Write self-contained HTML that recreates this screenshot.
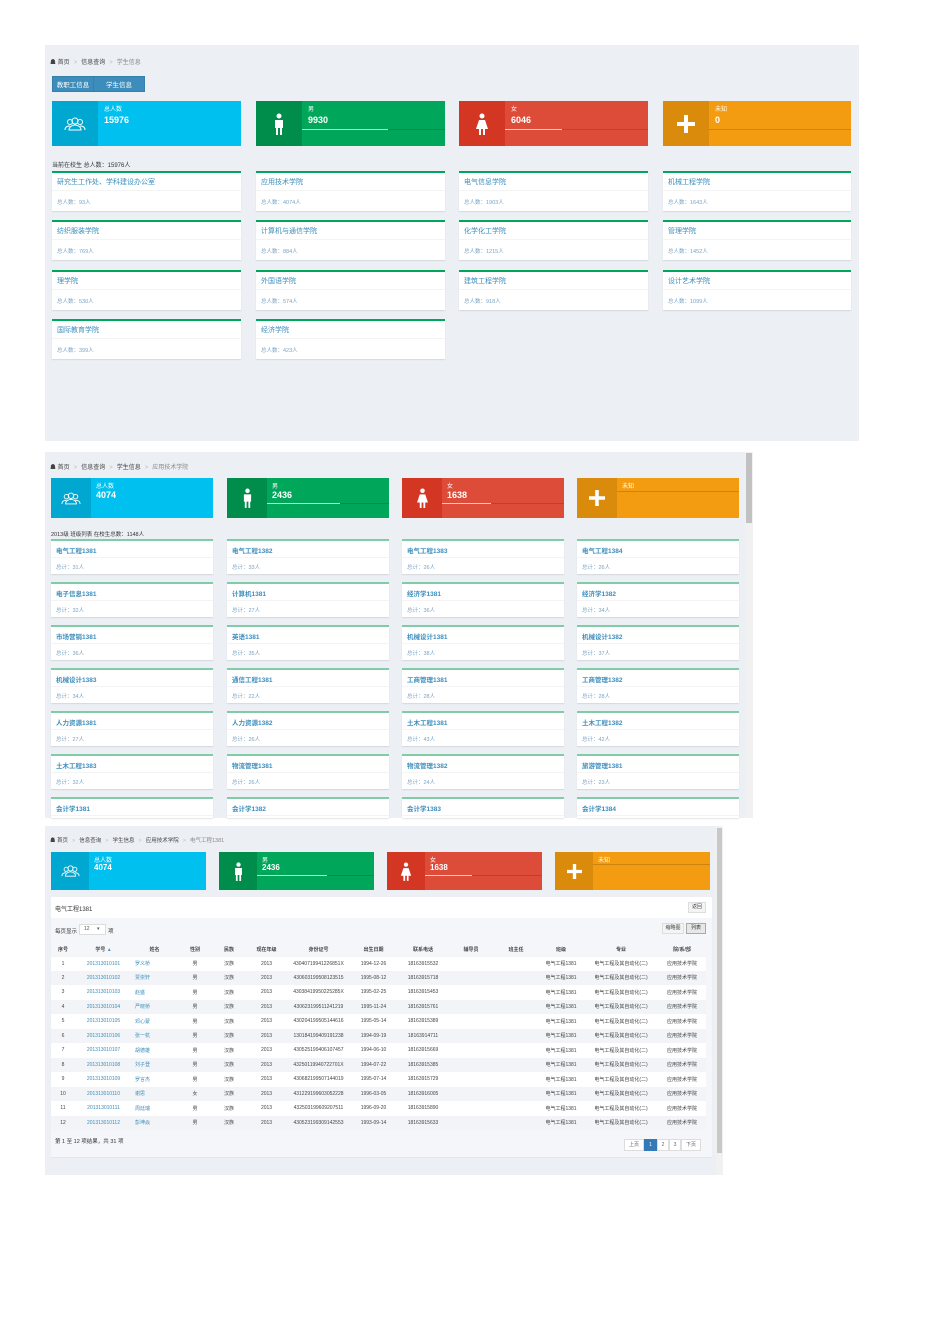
<!DOCTYPE html>
<html><head><meta charset="utf-8">
<style>
*{margin:0;padding:0;box-sizing:border-box}
body{width:950px;height:1344px;background:#fff;position:relative;font-family:"Liberation Sans","Noto Sans CJK SC",sans-serif;overflow:hidden}
.p{position:absolute;background:#ecf0f5}
.a{position:absolute}
.bc{position:absolute;font-size:6px;color:#444;white-space:nowrap}
.bc i{color:#bbb;font-style:normal;margin:0 4px}
.bc span.g{color:#888}
.sb{position:absolute;color:#fff;overflow:hidden}
.sb .ic{position:absolute;left:0;top:0;bottom:0;display:flex;align-items:center;justify-content:center}
.sb .l{position:absolute;font-size:6px}
.sb .n{position:absolute;font-size:9px;font-weight:bold}
.sb .bar{position:absolute;height:1px;background:rgba(0,0,0,.15)}
.sb .bar b{display:block;height:1px;background:rgba(255,255,255,.75)}
.cy{background:#00c0ef}.cy .ic{background:#00a7d0}
.gr{background:#00a65a}.gr .ic{background:#008d4c}
.rd{background:#dd4b39}.rd .ic{background:#d33724}
.og{background:#f39c12}.og .ic{background:#db8b0b}
.cd{position:absolute;background:#fff;border-top:2px solid #00a65a;box-shadow:0 1px 1px rgba(0,0,0,.1)}
.cd .t{position:absolute;left:5px;top:4px;font-size:7px;color:#3c8dbc;white-space:nowrap}
.cd .hr{position:absolute;left:0;right:0;border-top:1px solid #f4f4f4}
.cd .c{position:absolute;left:5px;font-size:5.5px;color:#7aa3c5;white-space:nowrap}
.c2{border-top-color:#7fcca6}
.c2 .t{font-weight:bold;font-size:6.5px}
table{border-collapse:collapse;table-layout:fixed;position:absolute;font-size:5px;color:#444}
td,th{height:14.5px;text-align:center;white-space:nowrap;overflow:hidden}
th{font-weight:bold;height:13px;border-bottom:1px solid #f4f4f4}
tr:nth-child(odd) td{background:#f2f4f7}
tr:nth-child(even) td{background:#fff}
td.b{color:#3c8dbc}
td.lft{text-align:left;padding-left:3px}
</style></head><body>

<!-- PANEL 1 -->
<div class="p" style="left:45px;top:45px;width:814px;height:396px"></div>
<div class="bc" style="left:50px;top:57px">☗ 首页<i>&gt;</i>信息查询<i>&gt;</i><span class="g">学生信息</span></div>
<div class="a" style="left:52px;top:76px;width:93px;height:16px;background:#3c8dbc;border:1px solid #367fa9;color:#fff;font-size:6.5px;display:flex">
<div style="width:41px;border-right:1px solid #367fa9;display:flex;align-items:center;justify-content:center">教职工信息</div>
<div style="flex:1;display:flex;align-items:center;justify-content:center">学生信息</div></div>

<div class="sb cy" style="left:52px;top:101px;width:189px;height:45px"><div class="ic" style="width:46px"><svg width="22" height="14" viewBox="0 0 22 14" fill="none" stroke="#fff" stroke-width="1"><circle cx="6" cy="5" r="2.5"/><circle cx="11" cy="4" r="3"/><circle cx="16" cy="5" r="2.5"/><path d="M1 13c0-3 2-4 5-4M21 13c0-3-2-4-5-4M5 13c0-3 3-5 6-5s6 2 6 5z"/></svg></div><div class="l" style="left:52px;top:3px">总人数</div><div class="n" style="left:52px;top:14px">15976</div></div>
<div class="sb gr" style="left:256px;top:101px;width:189px;height:45px"><div class="ic" style="width:46px"><svg width="10" height="22" viewBox="0 0 10 22" fill="#fff"><circle cx="5" cy="3" r="2.5"/><path d="M1 7h8v8H8v7H6v-7H4v7H2v-7H1z"/></svg></div><div class="l" style="left:52px;top:3px">男</div><div class="n" style="left:52px;top:14px">9930</div><div class="bar" style="left:46px;right:0;top:28px"><b style="width:60%"></b></div></div>
<div class="sb rd" style="left:459px;top:101px;width:189px;height:45px"><div class="ic" style="width:46px"><svg width="14" height="22" viewBox="0 0 14 22" fill="#fff"><circle cx="7" cy="3" r="2.5"/><path d="M4 7h6l3 9H10v6H8v-6H6v6H4v-6H1z"/></svg></div><div class="l" style="left:52px;top:3px">女</div><div class="n" style="left:52px;top:14px">6046</div><div class="bar" style="left:46px;right:0;top:28px"><b style="width:40%"></b></div></div>
<div class="sb og" style="left:663px;top:101px;width:188px;height:45px"><div class="ic" style="width:46px"><svg width="18" height="18" viewBox="0 0 18 18" fill="#fff"><path d="M7 0h4v7h7v4h-7v7H7v-7H0V7h7z"/></svg></div><div class="l" style="left:52px;top:3px">未知</div><div class="n" style="left:52px;top:14px">0</div><div class="bar" style="left:46px;right:0;top:28px"></div></div>

<div class="bc" style="left:52px;top:160px;color:#333">当前在校生 总人数：15976人</div>

<div class="cd" style="left:52px;top:171px;width:189px;height:40px"><div class="t">研究生工作处、学科建设办公室</div><div class="hr" style="top:17px"></div><div class="c" style="top:25px">总人数：93人</div></div>
<div class="cd" style="left:256px;top:171px;width:189px;height:40px"><div class="t">应用技术学院</div><div class="hr" style="top:17px"></div><div class="c" style="top:25px">总人数：4074人</div></div>
<div class="cd" style="left:459px;top:171px;width:189px;height:40px"><div class="t">电气信息学院</div><div class="hr" style="top:17px"></div><div class="c" style="top:25px">总人数：1903人</div></div>
<div class="cd" style="left:663px;top:171px;width:188px;height:40px"><div class="t">机械工程学院</div><div class="hr" style="top:17px"></div><div class="c" style="top:25px">总人数：1643人</div></div>
<div class="cd" style="left:52px;top:220px;width:189px;height:40px"><div class="t">纺织服装学院</div><div class="hr" style="top:17px"></div><div class="c" style="top:25px">总人数：769人</div></div>
<div class="cd" style="left:256px;top:220px;width:189px;height:40px"><div class="t">计算机与通信学院</div><div class="hr" style="top:17px"></div><div class="c" style="top:25px">总人数：884人</div></div>
<div class="cd" style="left:459px;top:220px;width:189px;height:40px"><div class="t">化学化工学院</div><div class="hr" style="top:17px"></div><div class="c" style="top:25px">总人数：1215人</div></div>
<div class="cd" style="left:663px;top:220px;width:188px;height:40px"><div class="t">管理学院</div><div class="hr" style="top:17px"></div><div class="c" style="top:25px">总人数：1452人</div></div>
<div class="cd" style="left:52px;top:270px;width:189px;height:40px"><div class="t">理学院</div><div class="hr" style="top:17px"></div><div class="c" style="top:25px">总人数：530人</div></div>
<div class="cd" style="left:256px;top:270px;width:189px;height:40px"><div class="t">外国语学院</div><div class="hr" style="top:17px"></div><div class="c" style="top:25px">总人数：574人</div></div>
<div class="cd" style="left:459px;top:270px;width:189px;height:40px"><div class="t">建筑工程学院</div><div class="hr" style="top:17px"></div><div class="c" style="top:25px">总人数：918人</div></div>
<div class="cd" style="left:663px;top:270px;width:188px;height:40px"><div class="t">设计艺术学院</div><div class="hr" style="top:17px"></div><div class="c" style="top:25px">总人数：1099人</div></div>
<div class="cd" style="left:52px;top:319px;width:189px;height:40px"><div class="t">国际教育学院</div><div class="hr" style="top:17px"></div><div class="c" style="top:25px">总人数：399人</div></div>
<div class="cd" style="left:256px;top:319px;width:189px;height:40px"><div class="t">经济学院</div><div class="hr" style="top:17px"></div><div class="c" style="top:25px">总人数：423人</div></div>

<!-- PANEL 2 -->
<div class="p" style="left:45px;top:452px;width:708px;height:366px"></div>
<div class="a" style="left:745px;top:452px;width:8px;height:366px;background:#f1f1f1"></div>
<div class="a" style="left:746px;top:453px;width:6px;height:70px;background:#c1c1c1"></div>
<div class="bc" style="left:50px;top:462px">☗ 首页<i>&gt;</i>信息查询<i>&gt;</i>学生信息<i>&gt;</i><span class="g">应用技术学院</span></div>

<div class="sb cy" style="left:51px;top:478px;width:162px;height:40px"><div class="ic" style="width:40px"><svg width="20" height="13" viewBox="0 0 22 14" fill="none" stroke="#fff" stroke-width="1"><circle cx="6" cy="5" r="2.5"/><circle cx="11" cy="4" r="3"/><circle cx="16" cy="5" r="2.5"/><path d="M1 13c0-3 2-4 5-4M21 13c0-3-2-4-5-4M5 13c0-3 3-5 6-5s6 2 6 5z"/></svg></div><div class="l" style="left:45px;top:3px">总人数</div><div class="n" style="left:45px;top:12px">4074</div></div>
<div class="sb gr" style="left:227px;top:478px;width:162px;height:40px"><div class="ic" style="width:40px"><svg width="9" height="20" viewBox="0 0 10 22" fill="#fff"><circle cx="5" cy="3" r="2.5"/><path d="M1 7h8v8H8v7H6v-7H4v7H2v-7H1z"/></svg></div><div class="l" style="left:45px;top:3px">男</div><div class="n" style="left:45px;top:12px">2436</div><div class="bar" style="left:40px;right:0;top:25px"><b style="width:60%"></b></div></div>
<div class="sb rd" style="left:402px;top:478px;width:162px;height:40px"><div class="ic" style="width:40px"><svg width="13" height="20" viewBox="0 0 14 22" fill="#fff"><circle cx="7" cy="3" r="2.5"/><path d="M4 7h6l3 9H10v6H8v-6H6v6H4v-6H1z"/></svg></div><div class="l" style="left:45px;top:3px">女</div><div class="n" style="left:45px;top:12px">1638</div><div class="bar" style="left:40px;right:0;top:25px"><b style="width:40%"></b></div></div>
<div class="sb og" style="left:577px;top:478px;width:162px;height:40px"><div class="ic" style="width:40px"><svg width="16" height="16" viewBox="0 0 18 18" fill="#fff"><path d="M7 0h4v7h7v4h-7v7H7v-7H0V7h7z"/></svg></div><div class="l" style="left:45px;top:3px">未知</div><div class="bar" style="left:40px;right:0;top:13px"></div></div>

<div class="bc" style="left:51px;top:530px;font-size:5.5px;color:#333">2013级 班级列表 在校生总数：1148人</div>

<div class="cd c2" style="left:51px;top:539px;width:162px;height:35px"><div class="t">电气工程1381</div><div class="hr" style="top:16px"></div><div class="c" style="top:22px">总计：31人</div></div>
<div class="cd c2" style="left:227px;top:539px;width:162px;height:35px"><div class="t">电气工程1382</div><div class="hr" style="top:16px"></div><div class="c" style="top:22px">总计：33人</div></div>
<div class="cd c2" style="left:402px;top:539px;width:162px;height:35px"><div class="t">电气工程1383</div><div class="hr" style="top:16px"></div><div class="c" style="top:22px">总计：26人</div></div>
<div class="cd c2" style="left:577px;top:539px;width:162px;height:35px"><div class="t">电气工程1384</div><div class="hr" style="top:16px"></div><div class="c" style="top:22px">总计：26人</div></div>
<div class="cd c2" style="left:51px;top:582px;width:162px;height:35px"><div class="t">电子信息1381</div><div class="hr" style="top:16px"></div><div class="c" style="top:22px">总计：32人</div></div>
<div class="cd c2" style="left:227px;top:582px;width:162px;height:35px"><div class="t">计算机1381</div><div class="hr" style="top:16px"></div><div class="c" style="top:22px">总计：27人</div></div>
<div class="cd c2" style="left:402px;top:582px;width:162px;height:35px"><div class="t">经济学1381</div><div class="hr" style="top:16px"></div><div class="c" style="top:22px">总计：36人</div></div>
<div class="cd c2" style="left:577px;top:582px;width:162px;height:35px"><div class="t">经济学1382</div><div class="hr" style="top:16px"></div><div class="c" style="top:22px">总计：34人</div></div>
<div class="cd c2" style="left:51px;top:625px;width:162px;height:35px"><div class="t">市场营销1381</div><div class="hr" style="top:16px"></div><div class="c" style="top:22px">总计：36人</div></div>
<div class="cd c2" style="left:227px;top:625px;width:162px;height:35px"><div class="t">英语1381</div><div class="hr" style="top:16px"></div><div class="c" style="top:22px">总计：35人</div></div>
<div class="cd c2" style="left:402px;top:625px;width:162px;height:35px"><div class="t">机械设计1381</div><div class="hr" style="top:16px"></div><div class="c" style="top:22px">总计：38人</div></div>
<div class="cd c2" style="left:577px;top:625px;width:162px;height:35px"><div class="t">机械设计1382</div><div class="hr" style="top:16px"></div><div class="c" style="top:22px">总计：37人</div></div>
<div class="cd c2" style="left:51px;top:668px;width:162px;height:35px"><div class="t">机械设计1383</div><div class="hr" style="top:16px"></div><div class="c" style="top:22px">总计：34人</div></div>
<div class="cd c2" style="left:227px;top:668px;width:162px;height:35px"><div class="t">通信工程1381</div><div class="hr" style="top:16px"></div><div class="c" style="top:22px">总计：22人</div></div>
<div class="cd c2" style="left:402px;top:668px;width:162px;height:35px"><div class="t">工商管理1381</div><div class="hr" style="top:16px"></div><div class="c" style="top:22px">总计：28人</div></div>
<div class="cd c2" style="left:577px;top:668px;width:162px;height:35px"><div class="t">工商管理1382</div><div class="hr" style="top:16px"></div><div class="c" style="top:22px">总计：28人</div></div>
<div class="cd c2" style="left:51px;top:711px;width:162px;height:35px"><div class="t">人力资源1381</div><div class="hr" style="top:16px"></div><div class="c" style="top:22px">总计：27人</div></div>
<div class="cd c2" style="left:227px;top:711px;width:162px;height:35px"><div class="t">人力资源1382</div><div class="hr" style="top:16px"></div><div class="c" style="top:22px">总计：26人</div></div>
<div class="cd c2" style="left:402px;top:711px;width:162px;height:35px"><div class="t">土木工程1381</div><div class="hr" style="top:16px"></div><div class="c" style="top:22px">总计：43人</div></div>
<div class="cd c2" style="left:577px;top:711px;width:162px;height:35px"><div class="t">土木工程1382</div><div class="hr" style="top:16px"></div><div class="c" style="top:22px">总计：42人</div></div>
<div class="cd c2" style="left:51px;top:754px;width:162px;height:35px"><div class="t">土木工程1383</div><div class="hr" style="top:16px"></div><div class="c" style="top:22px">总计：32人</div></div>
<div class="cd c2" style="left:227px;top:754px;width:162px;height:35px"><div class="t">物流管理1381</div><div class="hr" style="top:16px"></div><div class="c" style="top:22px">总计：26人</div></div>
<div class="cd c2" style="left:402px;top:754px;width:162px;height:35px"><div class="t">物流管理1382</div><div class="hr" style="top:16px"></div><div class="c" style="top:22px">总计：24人</div></div>
<div class="cd c2" style="left:577px;top:754px;width:162px;height:35px"><div class="t">旅游管理1381</div><div class="hr" style="top:16px"></div><div class="c" style="top:22px">总计：23人</div></div>
<div class="cd c2" style="left:51px;top:797px;width:162px;height:21px"><div class="t">会计学1381</div><div class="hr" style="top:16px"></div></div>
<div class="cd c2" style="left:227px;top:797px;width:162px;height:21px"><div class="t">会计学1382</div><div class="hr" style="top:16px"></div></div>
<div class="cd c2" style="left:402px;top:797px;width:162px;height:21px"><div class="t">会计学1383</div><div class="hr" style="top:16px"></div></div>
<div class="cd c2" style="left:577px;top:797px;width:162px;height:21px"><div class="t">会计学1384</div><div class="hr" style="top:16px"></div></div>

<!-- PANEL 3 -->
<div class="p" style="left:45px;top:826px;width:678px;height:349px"></div>
<div class="a" style="left:716px;top:826px;width:7px;height:349px;background:#f1f1f1"></div>
<div class="a" style="left:717px;top:828px;width:5px;height:325px;background:#c8c8c8"></div>
<div class="bc" style="left:50px;top:836px;font-size:5.5px">☗ 首页<i>&gt;</i>信息查询<i>&gt;</i>学生信息<i>&gt;</i>应用技术学院<i>&gt;</i><span class="g">电气工程1381</span></div>

<div class="sb cy" style="left:51px;top:852px;width:155px;height:38px"><div class="ic" style="width:38px"><svg width="19" height="12" viewBox="0 0 22 14" fill="none" stroke="#fff" stroke-width="1"><circle cx="6" cy="5" r="2.5"/><circle cx="11" cy="4" r="3"/><circle cx="16" cy="5" r="2.5"/><path d="M1 13c0-3 2-4 5-4M21 13c0-3-2-4-5-4M5 13c0-3 3-5 6-5s6 2 6 5z"/></svg></div><div class="l" style="left:43px;top:3px">总人数</div><div class="n" style="left:43px;top:11px;font-size:8px">4074</div></div>
<div class="sb gr" style="left:219px;top:852px;width:155px;height:38px"><div class="ic" style="width:38px"><svg width="9" height="19" viewBox="0 0 10 22" fill="#fff"><circle cx="5" cy="3" r="2.5"/><path d="M1 7h8v8H8v7H6v-7H4v7H2v-7H1z"/></svg></div><div class="l" style="left:43px;top:3px">男</div><div class="n" style="left:43px;top:11px;font-size:8px">2436</div><div class="bar" style="left:38px;right:0;top:23px"><b style="width:60%"></b></div></div>
<div class="sb rd" style="left:387px;top:852px;width:155px;height:38px"><div class="ic" style="width:38px"><svg width="12" height="19" viewBox="0 0 14 22" fill="#fff"><circle cx="7" cy="3" r="2.5"/><path d="M4 7h6l3 9H10v6H8v-6H6v6H4v-6H1z"/></svg></div><div class="l" style="left:43px;top:3px">女</div><div class="n" style="left:43px;top:11px;font-size:8px">1638</div><div class="bar" style="left:38px;right:0;top:23px"><b style="width:40%"></b></div></div>
<div class="sb og" style="left:555px;top:852px;width:155px;height:38px"><div class="ic" style="width:38px"><svg width="15" height="15" viewBox="0 0 18 18" fill="#fff"><path d="M7 0h4v7h7v4h-7v7H7v-7H0V7h7z"/></svg></div><div class="l" style="left:43px;top:3px">未知</div><div class="bar" style="left:38px;right:0;top:12px"></div></div>

<div class="a" style="left:51px;top:897px;width:661px;height:261px;background:#f4f6f9;border-bottom:1px solid #e4e7ea"></div>
<div class="a" style="left:51px;top:897px;width:661px;height:21px;background:#fff"></div>
<div class="a" style="left:55px;top:904px;font-size:6px;color:#333">电气工程1381</div>
<div class="a" style="left:688px;top:902px;width:18px;height:11px;border:1px solid #ddd;background:#f4f4f4;font-size:5px;color:#444;text-align:center;line-height:9px">返回</div>
<div class="a" style="left:55px;top:927px;font-size:5.5px;color:#333">每页显示</div>
<div class="a" style="left:79px;top:924px;width:27px;height:11px;border:1px solid #ddd;background:#fff;font-size:5px;color:#555;line-height:9px;padding-left:4px">12 <span style="margin-left:6px">▾</span></div>
<div class="a" style="left:108px;top:927px;font-size:5.5px;color:#333">项</div>
<div class="a" style="left:662px;top:923px;width:22px;height:11px;border:1px solid #ddd;background:#f4f4f4;font-size:5px;color:#444;text-align:center;line-height:9px">缩略图</div>
<div class="a" style="left:686px;top:923px;width:20px;height:11px;border:1px solid #aaa;background:#e7e7e7;font-size:5px;color:#333;text-align:center;line-height:9px">列表</div>

<table style="left:51px;top:943px;width:655px">
<colgroup><col style="width:24px"><col style="width:57px"><col style="width:45px"><col style="width:36px"><col style="width:32px"><col style="width:43px"><col style="width:61px"><col style="width:49px"><col style="width:50px"><col style="width:46px"><col style="width:44px"><col style="width:46px"><col style="width:74px"><col style="width:48px"></colgroup>
<tr><th style="background:#f4f6f9">序号</th><th style="background:#f4f6f9">学号 <span style="color:#5b8fc6">▲</span></th><th style="background:#f4f6f9">姓名</th><th style="background:#f4f6f9">性别</th><th style="background:#f4f6f9">民族</th><th style="background:#f4f6f9">现在年级</th><th style="background:#f4f6f9">身份证号</th><th style="background:#f4f6f9">出生日期</th><th style="background:#f4f6f9">联系电话</th><th style="background:#f4f6f9">辅导员</th><th style="background:#f4f6f9">班主任</th><th style="background:#f4f6f9">班级</th><th style="background:#f4f6f9">专业</th><th style="background:#f4f6f9">院/系/部</th></tr>
<tr><td>1</td><td class="b">201313010101</td><td class="b lft">罗义桥</td><td>男</td><td>汉族</td><td>2013</td><td>43040719941226851X</td><td>1994-12-26</td><td>18163915532</td><td></td><td></td><td>电气工程1381</td><td>电气工程及其自动化(二)</td><td>应用技术学院</td></tr>
<tr><td>2</td><td class="b">201313010102</td><td class="b lft">贾崇轩</td><td>男</td><td>汉族</td><td>2013</td><td>430603199508123515</td><td>1995-08-12</td><td>18163915718</td><td></td><td></td><td>电气工程1381</td><td>电气工程及其自动化(二)</td><td>应用技术学院</td></tr>
<tr><td>3</td><td class="b">201313010103</td><td class="b lft">赵盛</td><td>男</td><td>汉族</td><td>2013</td><td>43038419950225285X</td><td>1995-02-25</td><td>18163915453</td><td></td><td></td><td>电气工程1381</td><td>电气工程及其自动化(二)</td><td>应用技术学院</td></tr>
<tr><td>4</td><td class="b">201313010104</td><td class="b lft">严晓桥</td><td>男</td><td>汉族</td><td>2013</td><td>430623199511241219</td><td>1995-11-24</td><td>18163915761</td><td></td><td></td><td>电气工程1381</td><td>电气工程及其自动化(二)</td><td>应用技术学院</td></tr>
<tr><td>5</td><td class="b">201313010105</td><td class="b lft">邓心蒙</td><td>男</td><td>汉族</td><td>2013</td><td>430204199505144616</td><td>1995-05-14</td><td>18163915389</td><td></td><td></td><td>电气工程1381</td><td>电气工程及其自动化(二)</td><td>应用技术学院</td></tr>
<tr><td>6</td><td class="b">201313010106</td><td class="b lft">张一杭</td><td>男</td><td>汉族</td><td>2013</td><td>130184199409191238</td><td>1994-09-19</td><td>18163914711</td><td></td><td></td><td>电气工程1381</td><td>电气工程及其自动化(二)</td><td>应用技术学院</td></tr>
<tr><td>7</td><td class="b">201313010107</td><td class="b lft">胡德雄</td><td>男</td><td>汉族</td><td>2013</td><td>430525199406107457</td><td>1994-06-10</td><td>18163915669</td><td></td><td></td><td>电气工程1381</td><td>电气工程及其自动化(二)</td><td>应用技术学院</td></tr>
<tr><td>8</td><td class="b">201313010108</td><td class="b lft">刘子登</td><td>男</td><td>汉族</td><td>2013</td><td>43250119940722701X</td><td>1994-07-22</td><td>18163915385</td><td></td><td></td><td>电气工程1381</td><td>电气工程及其自动化(二)</td><td>应用技术学院</td></tr>
<tr><td>9</td><td class="b">201313010109</td><td class="b lft">罗言杰</td><td>男</td><td>汉族</td><td>2013</td><td>430682199507144019</td><td>1995-07-14</td><td>18163915729</td><td></td><td></td><td>电气工程1381</td><td>电气工程及其自动化(二)</td><td>应用技术学院</td></tr>
<tr><td>10</td><td class="b">201313010110</td><td class="b lft">谢思</td><td>女</td><td>汉族</td><td>2013</td><td>431229199603052228</td><td>1996-03-05</td><td>18163916005</td><td></td><td></td><td>电气工程1381</td><td>电气工程及其自动化(二)</td><td>应用技术学院</td></tr>
<tr><td>11</td><td class="b">201313010111</td><td class="b lft">周廷瑞</td><td>男</td><td>汉族</td><td>2013</td><td>432503199609207511</td><td>1996-09-20</td><td>18163915890</td><td></td><td></td><td>电气工程1381</td><td>电气工程及其自动化(二)</td><td>应用技术学院</td></tr>
<tr><td>12</td><td class="b">201313010112</td><td class="b lft">彭坤焱</td><td>男</td><td>汉族</td><td>2013</td><td>430523199309142553</td><td>1993-09-14</td><td>18163915633</td><td></td><td></td><td>电气工程1381</td><td>电气工程及其自动化(二)</td><td>应用技术学院</td></tr>
</table>

<div class="a" style="left:55px;top:1137px;font-size:5.5px;color:#333">第 1 至 12 项结果，共 31 项</div>
<div class="a" style="left:624px;top:1139px;height:12px;display:flex;font-size:5px;color:#666;line-height:10px">
<div style="width:20px;border:1px solid #ddd;background:#fff;text-align:center">上页</div>
<div style="width:13px;border:1px solid #337ab7;background:#337ab7;color:#fff;text-align:center">1</div>
<div style="width:12px;border:1px solid #ddd;background:#fff;text-align:center">2</div>
<div style="width:12px;border:1px solid #ddd;background:#fff;text-align:center">3</div>
<div style="width:20px;border:1px solid #ddd;background:#fff;text-align:center">下页</div></div>

</body></html>
